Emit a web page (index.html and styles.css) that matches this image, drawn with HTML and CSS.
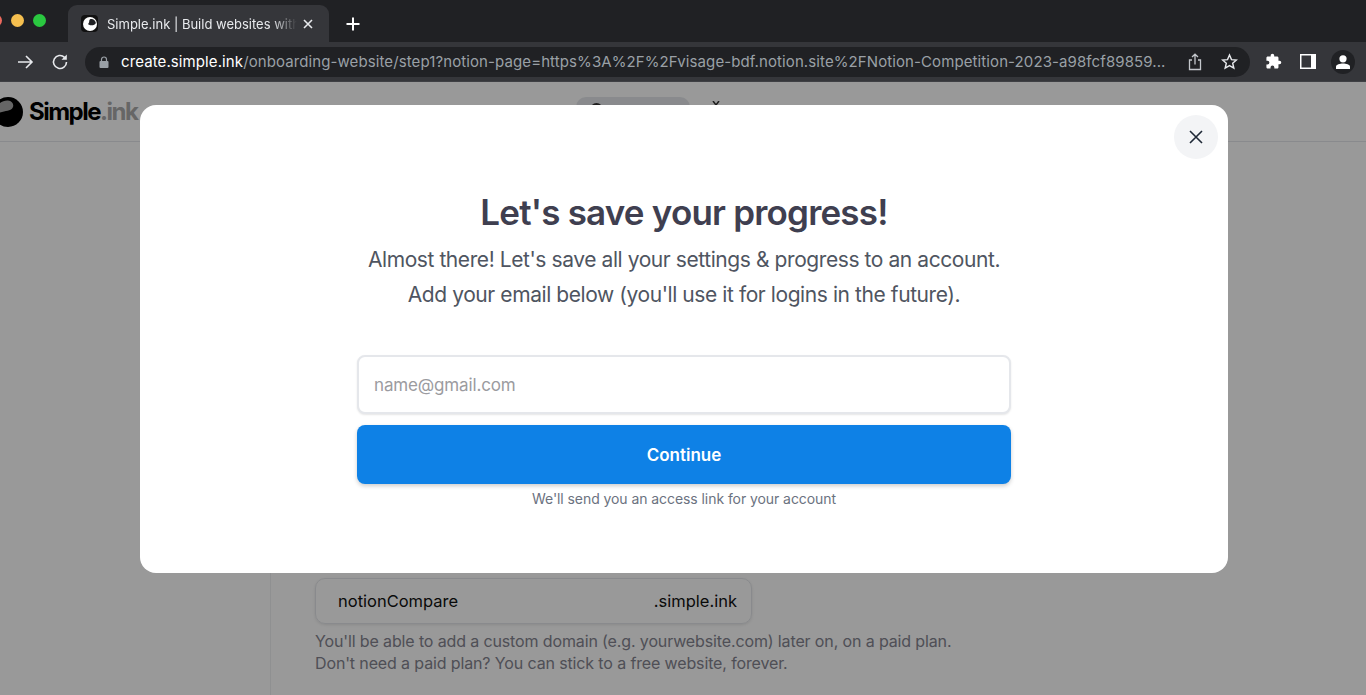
FILE: index.html
```html
<!DOCTYPE html>
<html lang="en">
<head>
    <meta charset="UTF-8">
    <title>Simple.ink | Build websites with Notion</title>
    <link rel="stylesheet" href="styles.css">
</head>

<body>
    <div class="tabstrip">
        <div class="lights">
            <span class="light red"></span>
            <span class="light orange"></span>
            <span class="light green"></span>
        </div>
        <div class="tab">
            <span class="favicon">
                <svg width="14" height="14" viewBox="0 0 24 24"><circle cx="12" cy="12" r="12" fill="#fff"/><path d="M22 10C21 4 15 2 12 4 9.500 6 12 9 9 11.500 7.500 13 14 15 17 14 20 13 22 12 22 10Z" fill="#202124"/></svg>
            </span>
            <span class="tab-title">Simple.ink | Build websites with</span>
            <svg class="tab-close" width="10" height="10" viewBox="0 0 10 10"><path d="M1 1L9 9M9 1L1 9" stroke="#e8eaed" stroke-width="1.600"/></svg>
        </div>
        <svg class="new-tab" width="14" height="14" viewBox="0 0 14 14"><path d="M7 0.500V13.500M0.500 7H13.500" stroke="#fff" stroke-width="2"/></svg>
    </div>

    <div class="toolbar">
        <svg class="tool-btn" width="18" height="18" viewBox="0 0 18 18"><path d="M2 9H16M10 3L16 9L10 15" fill="none" stroke="#e8eaed" stroke-width="1.600"/></svg>
        <svg class="tool-btn" width="18" height="18" viewBox="0 0 18 18"><path d="M15.500 9A6.500 6.500 0 1 1 13.500 4.300" fill="none" stroke="#e8eaed" stroke-width="1.600"/><path d="M15.800 1.500V6.800H10.500Z" fill="#e8eaed"/></svg>
        <div class="omnibox">
            <svg class="lock" width="10" height="12" viewBox="0 0 10 12"><path d="M2.500 5V3.500A2.500 2.500 0 0 1 7.500 3.500V5" fill="none" stroke="#9aa0a6" stroke-width="1.200"/><rect x="0.500" y="5" width="9" height="7" rx="1" fill="#9aa0a6"/></svg>
            <span class="url"><span class="url-host">create.simple.ink</span>/onboarding-website/step1?notion-page=https%3A%2F%2Fvisage-bdf.notion.site%2FNotion-Competition-2023-a98fcf89859...</span>
            <svg class="share" width="14" height="18" viewBox="0 0 14 18"><path d="M4 7H1.500V16.500H12.500V7H10M7 11.500V1.500M4 4L7 1.200L10 4" fill="none" stroke="#c4c7cc" stroke-width="1.300"/></svg>
            <svg class="star" width="17" height="17" viewBox="0 0 24 24"><path d="M12 2.800L14.800 9.300L21.800 9.900L16.500 14.500L18.100 21.400L12 17.800L5.900 21.400L7.500 14.500L2.200 9.900L9.200 9.300Z" fill="none" stroke="#e8eaed" stroke-width="2"/></svg>
        </div>
        <svg class="ext" width="17" height="17" viewBox="0 0 24 24"><path d="M20.500 11H19V7C19 5.900 18.100 5 17 5H13V3.500A2.500 2.500 0 0 0 8 3.500V5H4C2.900 5 2 5.900 2 7V10.800H3.500A2.700 2.700 0 0 1 3.500 16.200H2V20C2 21.100 2.900 22 4 22H7.800V20.500A2.700 2.700 0 0 1 13.200 20.500V22H17C18.100 22 19 21.100 19 20V16H20.500A2.500 2.500 0 0 0 20.500 11Z" fill="#fff"/></svg>
        <svg class="panel" width="16" height="15" viewBox="0 0 16 15"><rect width="16" height="15" fill="#fff"/><rect x="1.500" y="1.500" width="9.500" height="12" fill="#35363a"/></svg>
        <span class="avatar">
            <svg width="16" height="14" viewBox="0 0 16 14"><circle cx="8" cy="3.800" r="3.600" fill="#fff"/><path d="M1 14V11.500C1 9.500 5 8.500 8 8.500S15 9.500 15 11.500V14Z" fill="#fff"/></svg>
        </span>
    </div>

    <div class="page">
        <header class="site-header">
            <div class="logo">
                <svg class="logo-mark" width="30" height="30" viewBox="0 0 30 30"><circle cx="15" cy="15" r="15" fill="#000"/><path d="M1.500 18.500C2 9 8 3 15 3.500 19.500 4 21.500 8 19.500 11 17 15 9 13 1.500 18.500Z" fill="#aaa"/></svg>
                <span class="logo-text">Simple<span class="logo-ink">.ink</span></span>
            </div>
            <div class="site-pill"><span class="pill-dot"></span></div>
            <svg class="site-caret" width="8" height="6" viewBox="0 0 8 6"><path d="M1 0L4 4L7 0" fill="none" stroke="#333" stroke-width="1.500"/></svg>
        </header>

        <div class="site-body">
            <aside class="sidebar"></aside>
            <main class="step">
                <div class="domain-box">
                    <span>notionCompare</span>
                    <span>.simple.ink</span>
                </div>
                <p class="domain-hint">You'll be able to add a custom domain (e.g. yourwebsite.com) later on, on a paid plan.<br>Don't need a paid plan? You can stick to a free website, forever.</p>
            </main>
        </div>

        <div class="overlay">
            <div class="modal">
                <button class="modal-close">
                    <svg width="14" height="14" viewBox="0 0 14 14"><path d="M1 1L13 13M13 1L1 13" stroke="#1f2937" stroke-width="1.600"/></svg>
                </button>
                <h1>Let's save your progress!</h1>
                <p class="modal-text">Almost there! Let's save all your settings &amp; progress to an account.<br>Add your email below (you'll use it for logins in the future).</p>
                <form class="signup">
                    <input class="signup-input" type="text" placeholder="name@gmail.com">
                    <button class="signup-btn" type="button">Continue</button>
                    <p class="signup-note">We'll send you an access link for your account</p>
                </form>
            </div>
        </div>
    </div>
</body>
</html>
```

FILE: styles.css
```css
* {
    box-sizing: border-box;
}

body {
    font-family: 'Inter', sans-serif;
    margin: 0;
    height: 695px;
    overflow: hidden;
    background-color: #fff;
    display: flex;
    flex-direction: column;
}

/* browser chrome */
.tabstrip {
    height: 42px;
    background-color: #202124;
    display: flex;
    align-items: flex-end;
    flex-shrink: 0;
}

.lights {
    display: flex;
    gap: 9px;
    margin-left: -11px;
    align-self: flex-start;
    padding-top: 14px;
    width: 79px;
}

.light {
    width: 13px;
    height: 13px;
    border-radius: 50%;
    flex-shrink: 0;
}

.red { background-color: #ed6a5e; }
.orange { background-color: #f5bf4f; }
.green { background-color: #2ac840; }

.tab {
    width: 261px;
    height: 37px;
    background-color: #35363a;
    border-radius: 9px 9px 0 0;
    display: flex;
    align-items: center;
    padding: 0 12px 0 13px;
}

.favicon {
    width: 17px;
    height: 17px;
    background-color: #111;
    border-radius: 4px;
    display: flex;
    align-items: center;
    justify-content: center;
    flex-shrink: 0;
}

.tab-title {
    font-size: 13px;
    color: #e8eaed;
    margin-left: 9px;
    width: 190px;
    white-space: nowrap;
    -webkit-mask-image: linear-gradient(to right, #000 165px, transparent 190px);
    mask-image: linear-gradient(to right, #000 165px, transparent 190px);
}

.tab-close {
    margin-left: 6px;
    flex-shrink: 0;
}

.new-tab {
    margin: 0 0 11px 17px;
}

.toolbar {
    height: 40px;
    background-color: #35363a;
    border-bottom: 1px solid #3f4044;
    display: flex;
    align-items: center;
    padding-left: 16px;
    flex-shrink: 0;
}

.tool-btn {
    margin-right: 17px;
    flex-shrink: 0;
}

.tool-btn + .omnibox {
    margin-left: -1px;
}

.omnibox {
    width: 1165px;
    height: 30px;
    background-color: #202124;
    border-radius: 15px;
    display: flex;
    align-items: center;
    padding-left: 14px;
    flex-shrink: 0;
}

.lock {
    flex-shrink: 0;
}

.url {
    font-size: 15px;
    line-height: 20px;
    padding-top: 1px;
    letter-spacing: 0.1px;
    color: #9aa0a6;
    margin-left: 12px;
    width: 1049px;
    white-space: nowrap;
}

.url-host {
    color: #fff;
}

.share {
    margin-left: 18px;
    flex-shrink: 0;
}

.star {
    margin-left: 19px;
    flex-shrink: 0;
}

.ext {
    margin-left: 15px;
    flex-shrink: 0;
}

.panel {
    margin-left: 18px;
    flex-shrink: 0;
}

.avatar {
    width: 24px;
    height: 24px;
    border-radius: 50%;
    background-color: #202124;
    margin-left: 15px;
    display: flex;
    align-items: center;
    justify-content: center;
    flex-shrink: 0;
}

/* page behind the modal */
.page {
    flex: 1;
    position: relative;
    overflow: hidden;
}

.site-header {
    height: 60px;
    border-bottom: 1px solid #e5e7eb;
    display: flex;
    align-items: center;
}

.logo {
    display: flex;
    align-items: center;
    margin-left: -7px;
    width: 583px;
    flex-shrink: 0;
}

.logo-text {
    font-size: 24px;
    line-height: 30px;
    padding-top: 1px;
    font-weight: 700;
    letter-spacing: -1.5px;
    color: #000;
    margin-left: 6px;
}

.logo-ink {
    color: #aaa;
}

.site-pill {
    width: 114px;
    height: 30px;
    background-color: #e5e7eb;
    border-radius: 10px;
    padding: 6px 0 0 14px;
}

.pill-dot {
    display: block;
    width: 13px;
    height: 13px;
    border-radius: 50%;
    border: 2px solid #333;
}

.site-caret {
    margin: 0 0 16px 22px;
}

.site-body {
    display: flex;
}

.sidebar {
    width: 271px;
    height: 560px;
    border-right: 1px solid #eef0f2;
    flex-shrink: 0;
}

.step {
    padding: 436px 0 0 44px;
}

.domain-box {
    width: 437px;
    height: 46px;
    border: 1px solid #e5e7eb;
    border-radius: 10px;
    box-shadow: 0 1px 3px rgba(0, 0, 0, 0.1);
    display: flex;
    align-items: center;
    justify-content: space-between;
    padding: 0 14px 0 22px;
    font-size: 16.500px;
    color: #111;
}

.domain-hint {
    margin: 6px 0 0;
    font-size: 16px;
    letter-spacing: -0.13px;
    line-height: 22px;
    color: #84848f;
    white-space: nowrap;
}

.overlay {
    position: absolute;
    top: 0;
    left: 0;
    width: 100%;
    height: 100%;
    background-color: rgba(0, 0, 0, 0.4);
    padding: 23px 0 0 140px;
}

.modal {
    width: 1088px;
    height: 468px;
    background-color: #fff;
    border-radius: 16px;
    padding-top: 84px;
    position: relative;
    display: flex;
    flex-direction: column;
    align-items: center;
    text-align: center;
}

.modal-close {
    position: absolute;
    top: 10px;
    right: 10px;
    width: 44px;
    height: 44px;
    border: 0;
    padding: 0;
    border-radius: 50%;
    background-color: #f3f4f6;
    display: flex;
    align-items: center;
    justify-content: center;
}

.modal h1 {
    margin: 0;
    font-size: 35px;
    letter-spacing: -0.8px;
    line-height: 46px;
    font-weight: 600;
    color: #3f3f50;
}

.modal-text {
    margin: 7px 0 0;
    font-size: 21px;
    letter-spacing: -0.42px;
    line-height: 35px;
    color: #4f5561;
}

.signup {
    width: 654px;
    margin-top: 43px;
    display: flex;
    flex-direction: column;
}

.signup-input {
    height: 59px;
    border: 2px solid #e5e7eb;
    border-radius: 8px;
    padding: 0 15px;
    font-family: inherit;
    font-size: 17px;
    letter-spacing: -0.15px;
    box-shadow: 0 1px 2px rgba(0, 0, 0, 0.1);
}

.signup-input::placeholder {
    color: #9b9b9f;
}

.signup-btn {
    height: 59px;
    margin-top: 11px;
    border: 0;
    border-radius: 8px;
    background-color: #0e81e6;
    color: #fff;
    font-family: inherit;
    font-size: 17px;
    font-weight: 600;
    box-shadow: 0 2px 4px rgba(0, 0, 0, 0.2);
}

.signup-note {
    margin: 4px 0 0;
    font-size: 14px;
    letter-spacing: -0.07px;
    line-height: 22px;
    color: #6b7280;
}
```
